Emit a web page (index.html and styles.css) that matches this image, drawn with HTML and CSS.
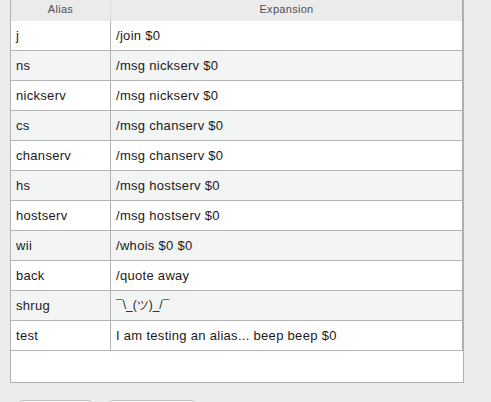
FILE: index.html
```html
<!DOCTYPE html>
<html>
<head>
<meta charset="utf-8">
<link rel="stylesheet" href="styles.css">
</head>
<body>
<div class="panel">
  <div class="table">
    <div class="head">
      <div class="hcell c1">Alias</div>
      <div class="hcell c2">Expansion</div>
    </div>
    <div class="row"><div class="cell c1">j</div><div class="cell c2">/join $0</div></div>
    <div class="row alt"><div class="cell c1">ns</div><div class="cell c2">/msg nickserv $0</div></div>
    <div class="row"><div class="cell c1">nickserv</div><div class="cell c2">/msg nickserv $0</div></div>
    <div class="row alt"><div class="cell c1">cs</div><div class="cell c2">/msg chanserv $0</div></div>
    <div class="row"><div class="cell c1">chanserv</div><div class="cell c2">/msg chanserv $0</div></div>
    <div class="row alt"><div class="cell c1">hs</div><div class="cell c2">/msg hostserv $0</div></div>
    <div class="row"><div class="cell c1">hostserv</div><div class="cell c2">/msg hostserv $0</div></div>
    <div class="row alt"><div class="cell c1">wii</div><div class="cell c2">/whois $0 $0</div></div>
    <div class="row"><div class="cell c1">back</div><div class="cell c2">/quote away</div></div>
    <div class="row alt"><div class="cell c1">shrug</div><div class="cell c2 shrug">¯\_(ツ)_/¯</div></div>
    <div class="row"><div class="cell c1">test</div><div class="cell c2">I am testing an alias... beep beep $0</div></div>
  </div>
</div>
<div class="buttons">
  <div class="btn b1"></div>
  <div class="btn b2"></div>
</div>
</body>
</html>
```
FILE: styles.css
```css
html, body {
  margin: 0;
  padding: 0;
  background: #ececec;
  overflow: hidden;
}
body {
  width: 491px;
  height: 402px;
  font-family: "Liberation Sans", Arial, sans-serif;
  color: #1a1a1a;
}
.panel {
  margin-left: 10px;
  width: 452px;
  height: 382px;
  border: 1px solid #b2b2b2;
  border-top: none;
  background: #ffffff;
}
.table {
  display: flex;
  flex-direction: column;
  border-right: 1px solid #a9a9a9;
  width: 451px;
}
.head {
  display: flex;
  height: 21px;
  background: #ebebeb;
}
.hcell {
  font-size: 11px;
  color: #505050;
  text-align: center;
  line-height: 19px;
  letter-spacing: 0.3px;
}
.head .c1 {
  width: 99px;
  border-right: 1px solid #dcdcdc;
}
.head .c2 {
  flex: 1;
}
.row {
  display: flex;
  height: 29px;
  border-bottom: 1px solid #b4b4b4;
  background: #ffffff;
}
.row.alt {
  background: #f3f4f4;
}
.cell {
  font-size: 13px;
  line-height: 29px;
  padding-left: 5px;
  white-space: nowrap;
  letter-spacing: 0.3px;
}
.row .c1 {
  width: 94px;
  border-right: 1px solid #b4b4b4;
}
.row .c2 {
  flex: 1;
}
.shrug {
  font-size: 12px;
  letter-spacing: 0;
}
.buttons {
  display: flex;
  margin-top: 17px;
  margin-left: 18px;
  gap: 15px;
}
.btn {
  height: 20px;
  background: #f6f6f6;
  border-top: 1px solid #c4c4c4;
  border-radius: 5px 5px 0 0;
}
.b1 { width: 75px; }
.b2 { width: 88px; }
```
